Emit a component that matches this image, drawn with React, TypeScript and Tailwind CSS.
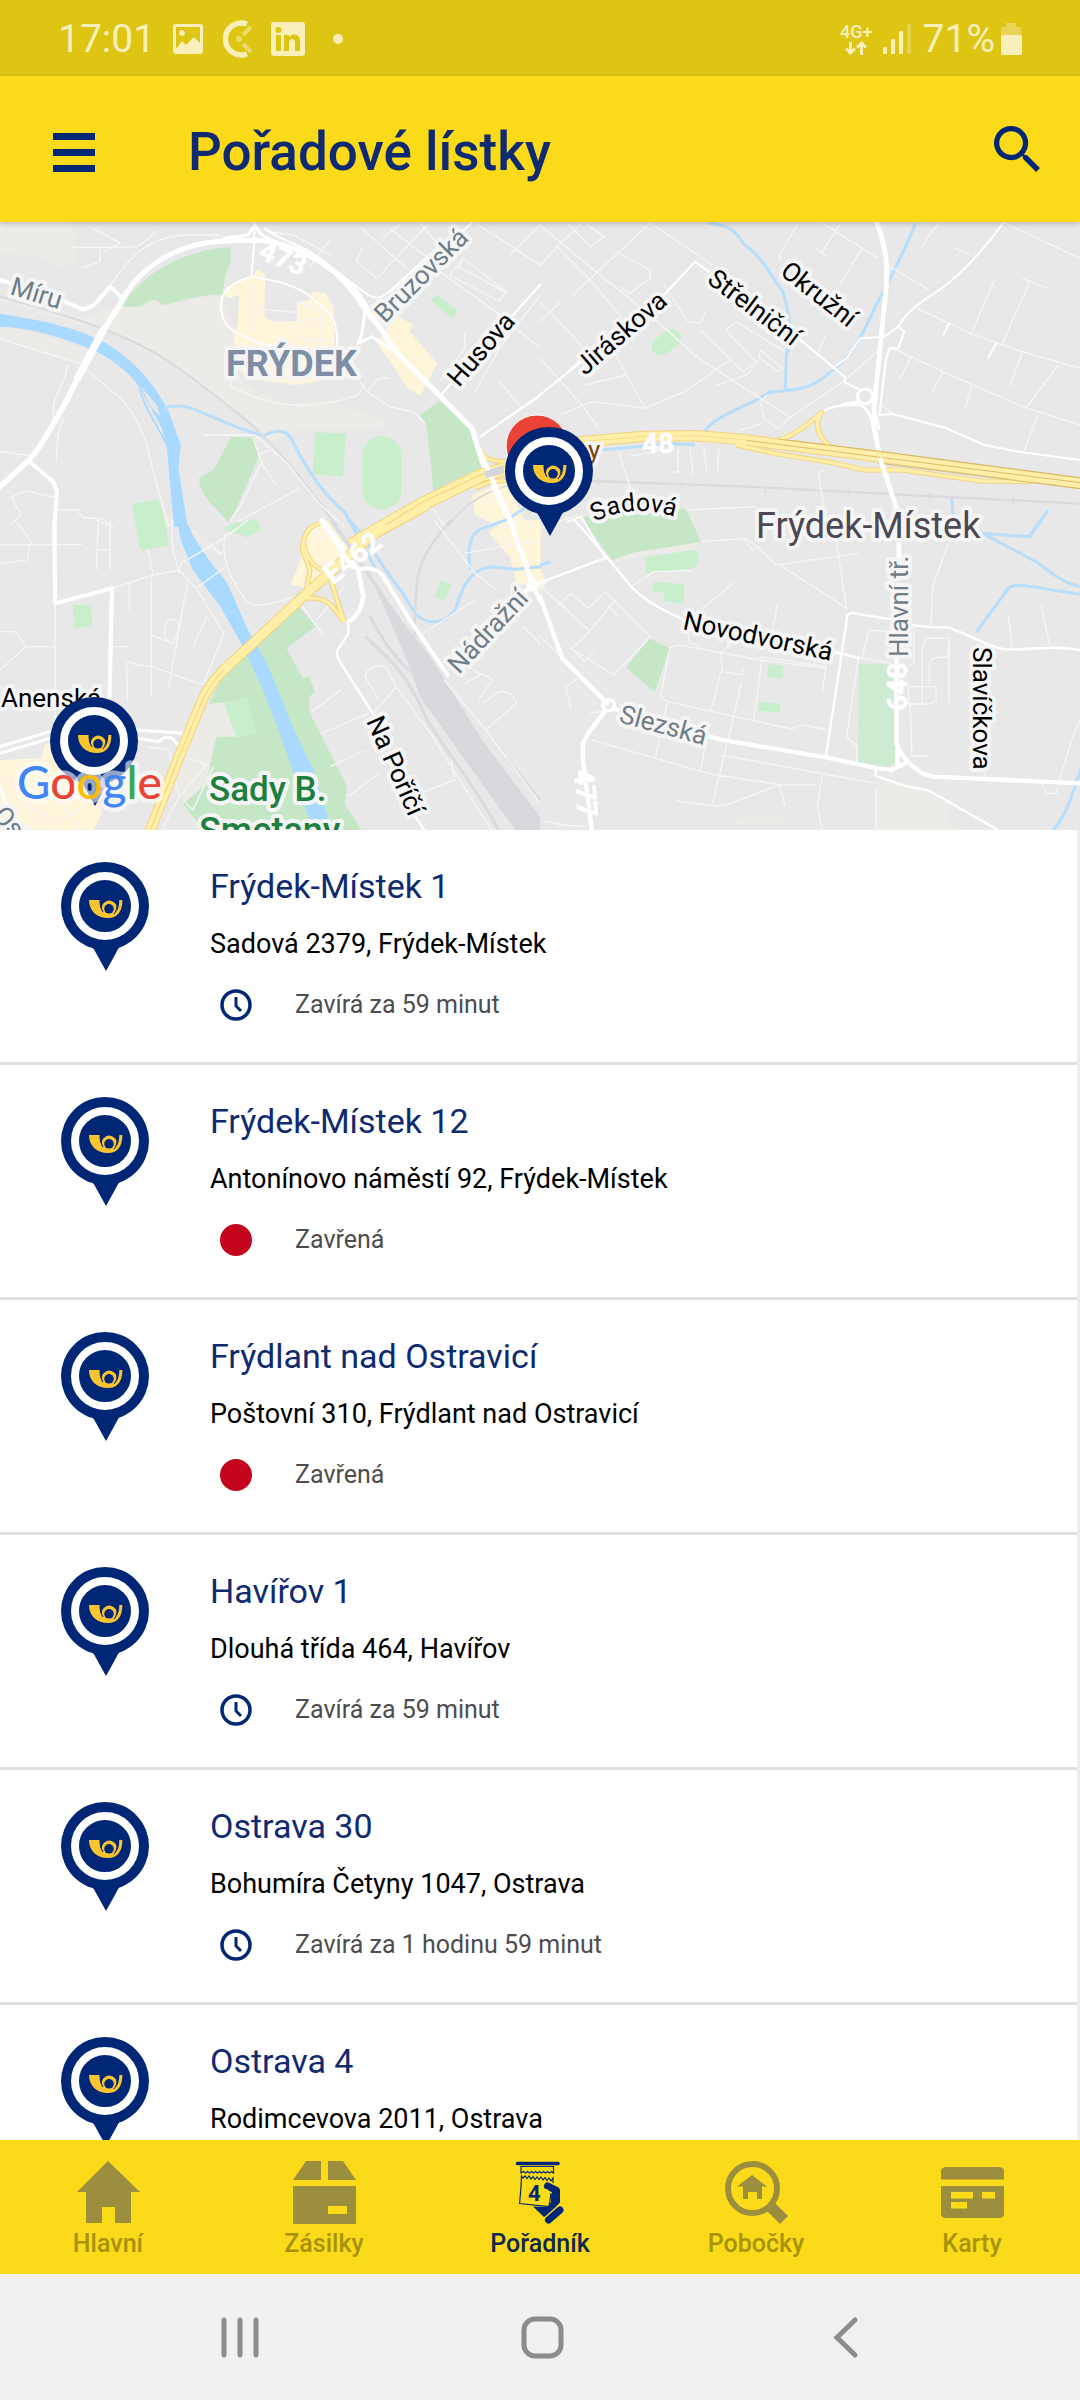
import type { ReactNode } from "react";

type Branch = { name: string; address: string; status: string; open: boolean };

const branches: Branch[] = [
  { name: "Frýdek-Místek 1", address: "Sadová 2379, Frýdek-Místek", status: "Zavírá za 59 minut", open: true },
  { name: "Frýdek-Místek 12", address: "Antonínovo náměstí 92, Frýdek-Místek", status: "Zavřená", open: false },
  { name: "Frýdlant nad Ostravicí", address: "Poštovní 310, Frýdlant nad Ostravicí", status: "Zavřená", open: false },
  { name: "Havířov 1", address: "Dlouhá třída 464, Havířov", status: "Zavírá za 59 minut", open: true },
  { name: "Ostrava 30", address: "Bohumíra Četyny 1047, Ostrava", status: "Zavírá za 1 hodinu 59 minut", open: true },
  { name: "Ostrava 4", address: "Rodimcevova 2011, Ostrava", status: "Zavírá za 59 minut", open: true },
];

function PinShape() {
  return (
    <>
      <path d="M26 80Q33 86 35 91L45 109L55 91Q57 86 63 80Z" fill="#002776" />
      <circle cx="44" cy="44" r="44" fill="#002776" />
      <circle cx="44" cy="44" r="30" fill="none" stroke="#fff" strokeWidth="8" />
      <path
        d="M28 38H38.5C38.5 44 39.5 47 41.5 49.5A7.6 7.6 0 1 1 52 52.8C56.5 50 58.3 45 58.3 38H61.4C61.4 50 56 56 47 56C36 56 28 49 28 38Z"
        fill="#fbc531"
      />
      <path d="M39.5 38C39.3 43 40 46.5 42 50M56 38C56.8 43 56 48 53 52" fill="none" stroke="#002776" strokeWidth="1" />
      <circle cx="48" cy="46.8" r="4.8" fill="#002776" />
    </>
  );
}

function PinIcon() {
  return (
    <svg viewBox="0 0 88 109" className="h-[109px] w-[88px]" aria-hidden="true">
      <PinShape />
    </svg>
  );
}

/* The map is authored as four tiles, each with its own fine grid. */
function Tile({ at, children }: { at: "nw" | "ne" | "sw" | "se"; children: ReactNode }) {
  const x = at === "nw" || at === "sw" ? 0 : 540;
  const y = at === "nw" || at === "ne" ? 215 : 520;
  return <g transform={`translate(${x} ${y}) scale(0.3444 0.3333)`}>{children}</g>;
}

function MapLabel({
  x, y, angle = 0, size = 26, color = "#000", weight = 400, halo = 8, children,
}: {
  x: number; y: number; angle?: number; size?: number; color?: string; weight?: number; halo?: number; children: ReactNode;
}) {
  return (
    <text
      transform={`translate(${x} ${y}) rotate(${angle})`}
      fontSize={size}
      fill={color}
      fontWeight={weight}
      stroke="#f5f5f5"
      strokeWidth={halo}
      strokeLinejoin="round"
      paintOrder="stroke"
    >
      {children}
    </text>
  );
}

function CityMap() {
  return (
    <svg
      viewBox="0 222 1080 608"
      preserveAspectRatio="xMidYMid slice"
      className="block h-[608px] w-full bg-[#e8e8e8]"
      fontFamily="Roboto, sans-serif"
      role="img"
      aria-label="Mapa poboček, Frýdek-Místek"
    >
      {/* land use */}
      <Tile at="nw">
        <g fill="#ecebe7">
          <path d="M0 20H200L220 60L215 140L165 160L120 125L0 115Z" />
          <path d="M0 240L150 285L250 310L330 275L450 255L475 270L640 240L690 350V480L740 530L850 570L960 555L1120 620L1110 640L860 645L790 680L740 640L540 475L330 355L0 260Z" />
          <path d="M0 340L90 350L250 400L250 450L0 370Z" />
        </g>
        <g fill="#c6e7c6">
          <path d="M355 275C400 190 520 105 668 96L672 140C650 170 652 210 645 240C590 235 520 260 472 270L450 252L400 276Z" />
          <path d="M1220 600L1275 558L1370 640L1397 700V760L1258 825C1250 740 1245 660 1235 625Z" />
          <path d="M672 665L735 668L750 730L665 930C640 880 585 860 577 790L620 765Z" />
        </g>
        <g fill="#c9eecb">
          <path d="M383 868L460 852L490 980L405 1000Z" />
          <path d="M915 652L1005 655L996 785L908 778Z" />
          <rect x="1052" y="664" width="114" height="220" rx="57" />
          <path d="M1250 258L1270 238L1330 290L1312 312Z" />
          <path d="M660 930L740 912L750 940L700 960L650 945Z" />
        </g>
        <g fill="#fef5da">
          <path d="M650 240L660 220L735 180L750 162L770 180L768 305L795 320L862 318V262L900 255L905 230L945 235L968 275L975 490L860 510L720 490L680 450V360L690 330L695 240L665 250Z" />
          <path d="M1095 385L1150 300L1200 330L1190 350L1270 445L1220 542L1180 515L1140 450Z" />
          <path d="M1370 840L1470 800L1530 930H1440L1380 900Z" />
        </g>
      </Tile>
      <Tile at="ne">
        <path d="M118 908L420 880L465 980L300 1010L210 1035Z" fill="#c6e7c6" />
        <rect x="320" y="355" width="94" height="54" rx="27" fill="#c9eecb" transform="rotate(-38 367 382)" />
      </Tile>
      <Tile at="sw">
        <path d="M420 -20L530 0L650 100L600 90L560 40Z" fill="#ecebe7" />
        <path d="M600 550L660 545L690 650L620 655L600 800L540 850L490 800L560 640Z" fill="#ecebe7" />
        <g fill="#c6e7c6">
          <path d="M720 390L870 260L917 320L832 385L880 475L897 470L915 515L897 530L900 580L1008 800L1000 850L1050 930H590L532 852L600 790L628 650L745 640L690 545L605 555L640 480Z" />
          <path d="M600 553L660 545L690 650L628 650Z" fill="#ecebe7" />
        </g>
        <g fill="#c9eecb">
          <path d="M392 0L470 -40L490 75L412 92Z" />
          <path d="M212 254H264L267 320L216 324Z" />
          <path d="M696 28L745 0L760 28L710 55Z" />
          <path d="M650 548L715 530L748 635L688 655Z" />
          <path d="M1280 182L1310 195L1290 243L1260 228Z" />
        </g>
        <g fill="#fef5da">
          <path d="M0 720L120 715L130 675L200 665L280 790L295 880L270 935H0Z" />
          <path d="M900 20L950 0L1030 110L960 160L900 205L843 195L870 130L885 60Z" />
          <path d="M1420 40L1460 0H1570V200L1500 190L1480 110Z" />
        </g>
      </Tile>
      <Tile at="se">
        <g fill="#c6e7c6">
          <path d="M118 -10L430 -20L467 65L270 95L210 120Z" />
          <path d="M318 355L377 385L333 515L250 443Z" />
          <path d="M926 432H1032L1030 730L1010 742L922 730Z" fill="#cdebd0" />
        </g>
        <path d="M215 118L280 95L465 68L460 85L300 105L215 130Z" fill="#ecebe7" />
        <g fill="#c9eecb">
          <path d="M303 112L450 90C470 105 465 140 440 145L310 162Z" />
          <path d="M330 185L420 192L415 252L360 243V218L325 214Z" />
          <path d="M664 432L706 437L703 478L660 470Z" />
          <path d="M636 545L698 552L697 579L633 572Z" />
        </g>
        <path d="M980 775L1120 810L1195 850L1185 910L1240 935H975Z" fill="#ecebe7" />
        <path d="M540 910L650 882L710 895L715 912Z" fill="#ecebe7" />
        <path d="M0 140L18 190L0 215Z" fill="#fef5da" />
      </Tile>

      {/* water */}
      <Tile at="nw">
        <path d="M0 296C120 315 210 335 290 375C390 430 450 510 490 590L525 690L518 760L545 935H505L485 700L470 640L407 520C370 460 310 425 270 405C190 370 80 335 0 335Z" fill="#a9d9ff" />
        <path d="M405 520C420 580 450 620 485 690" fill="none" stroke="#a9d9ff" strokeWidth="5" />
        <path d="M408 512L455 570L465 605L438 575Z" fill="#e8e8e8" />
        <path d="M475 578C520 568 545 572 580 590C660 625 700 645 765 662C810 640 835 645 850 680C890 760 930 830 1000 890L1100 1080" fill="none" stroke="#b9def9" strokeWidth="9" />
      </Tile>
      <Tile at="ne">
        <g fill="none" stroke="#b9def9" strokeWidth="9">
          <path d="M490 24C550 30 570 50 590 85C650 130 660 170 705 230C725 300 735 360 715 420L712 525" />
          <path d="M1090 24C1060 110 1020 180 1000 225C940 330 935 400 850 465C790 525 740 525 665 532C620 570 500 600 475 655" />
          <path d="M175 705C270 700 350 680 450 690" />
          <path d="M1195 850L1200 900" />
          <path d="M1475 885L1420 970" />
        </g>
      </Tile>
      <Tile at="sw">
        <path d="M512 -20L550 20L562 50L600 110L660 190L720 330L775 430L850 620L910 750L965 935H910L860 780L805 620L760 500L700 370L640 260L560 150L525 60Z" fill="#a9d9ff" />
        <g fill="none" stroke="#b9def9" strokeWidth="9">
          <path d="M1015 0C1070 60 1100 130 1170 220C1210 290 1220 310 1270 305C1340 290 1320 230 1360 180C1410 120 1440 145 1500 148L1570 140" />
          <path d="M1366 150C1355 80 1365 40 1400 25L1470 0L1560 -60" />
        </g>
      </Tile>
      <Tile at="se">
        <g fill="none" stroke="#b9def9" strokeWidth="9">
          <path d="M1200 -20L1240 15L1440 125C1500 170 1520 190 1570 200" />
          <path d="M1280 40L1420 50L1465 -15" />
          <path d="M1268 335L1360 205C1380 185 1440 205 1570 222" />
          <path d="M1580 720C1550 800 1540 870 1490 930" />
          <path d="M0 135L32 126" />
        </g>
      </Tile>

      {/* railways */}
      <g fill="none" stroke="#dadbdf">
        <Tile at="nw">
          <path d="M0 245C140 285 250 320 330 355C450 400 540 470 720 620C840 730 900 830 980 935" strokeWidth="7" />
          <path d="M1300 935C1350 860 1420 825 1500 805" strokeWidth="6" />
        </Tile>
        <Tile at="ne">
          <path d="M150 798L600 815L1100 842L1570 866" strokeWidth="7" />
          <path d="M170 788V808M412 800V822M653 812V834M895 824V846M1131 832V854M1373 846V868" strokeWidth="5" />
        </Tile>
        <Tile at="sw">
          <path d="M960 0C1060 140 1130 260 1190 350L1230 400" strokeWidth="10" />
          <path d="M1310 0C1240 80 1215 130 1210 200C1205 280 1200 340 1205 400" strokeWidth="8" />
          <path d="M1060 350C1150 430 1190 480 1240 600C1300 700 1400 830 1450 935M1075 290C1120 380 1160 430 1200 460" strokeWidth="9" />
          <path d="M1085 190L1180 320L1250 410L1400 660L1568 890V935H1500L1350 720L1220 530L1190 440Z" fill="#d7d9dd" stroke="none" />
          <path d="M1470 715L1568 840" strokeWidth="9" />
        </Tile>
      </g>

      {/* minor streets */}
      <g fill="none" stroke="#f6f6f6" strokeWidth="4">
        <Tile at="nw">
          <path d="M210 97H290L400 95L455 50M290 100V140L240 158M300 110L350 85L270 40M320 212C380 120 430 70 530 60L640 60" />
          <path d="M0 372L230 445L350 550C430 640 430 720 450 790L490 935M195 450C190 520 150 530 155 610M185 610C165 640 165 700 165 740M0 710L85 722M25 850L75 828L170 850M35 850L60 900L30 930M160 885H225L240 908L300 912L330 940" />
          <path d="M590 660H740L830 740L930 870L1000 935M735 670L760 740L700 870L660 930M760 745L800 808M750 720L785 705M870 820L690 920" />
          <path d="M670 485V515L745 548C860 590 960 570 1040 540L1060 505M1045 500L1065 530L1100 490L1130 488M1065 530L1130 575L1200 590L1235 625M850 440V510" />
          <path d="M735 280L855 292M735 200V350M865 262L920 280L940 300L930 390M865 318L935 310M880 375H970M865 310V380" />
          <path d="M780 50L850 60L960 120M960 70L900 155M1050 40L1180 160M1110 70L1160 30M1220 24L1290 110M1050 100L1035 140L1095 190L1240 30M1130 40L1250 135M1305 180L1450 258L1470 230L1345 130ZM1330 155L1465 230M1345 130L1330 160M1260 155L1450 300L1568 400M1290 180L1480 320M1380 24L1568 150M1480 120L1568 30M1568 240L1450 400L1380 530M1450 500L1515 580M1350 350V400L1280 500" />
          <path d="M1258 880L1290 935M1395 665L1568 545" />
        </Tile>
        <Tile at="ne">
          <path d="M0 30L150 160L320 300L460 430L730 610M50 95L150 200L240 310M0 150L50 95L120 24M95 240L320 24L500 150M80 24L145 95L185 65L130 24M220 110L320 165V190L260 235L230 215M0 260L110 380L125 400L105 450M0 430L130 580L170 640M0 540L70 480L100 450L250 340M220 420L305 580M130 510L250 480M60 600L150 560L305 580L420 530L560 430M0 320L60 260M360 210L430 320L465 325L480 290M465 345L590 470L635 435L640 405L705 460L690 470L640 430M540 345L570 320L710 410M540 345L630 445L600 480L510 512M800 430L830 360M660 540L640 560L650 610L690 640L730 605L880 500L990 400M580 645L650 625M750 24L695 120L700 140M800 100L835 125M820 110L870 30M935 100L870 210M935 100L820 24M935 100L980 130" />
          <path d="M1000 145L1130 225M1130 60L1160 24M1108 100L1130 60M1200 98L1250 120M1350 24L1568 130M1095 280L1250 355L1400 410L1568 460M1400 190L1478 222M1425 195L1340 390M1320 195L1250 360M1400 410L1365 515M1505 450L1410 580M1015 395L1170 470L1400 575L1568 630M1078 425L1045 492M1170 470L1140 530M1252 515L1235 578M1445 600L1405 712M990 570L1030 600" />
          <path d="M230 715L265 830L290 850M400 700L402 770L378 772M435 695L445 780M475 695L485 775M520 700L515 775M265 722L390 700M825 765L808 775L825 880M0 940L110 900M430 885L630 875" />
        </Tile>
        <Tile at="sw">
          <path d="M0 75L240 73M95 73L60 20L40 0M85 75L80 120L0 130M285 0L280 150M280 90H320M322 20L280 0M320 0V150M375 185V270M160 250V640M160 380H75L45 335H0M75 380L0 450M0 500L50 540M325 380H375M440 165V525M545 185L490 500M370 545L368 430Q380 420 395 435L440 440L590 495M430 90L445 165L325 205M445 165L520 150L570 205L650 340L590 495M570 205L655 140M440 345L500 370Q520 340 520 310Q490 280 480 320Q470 360 500 370M600 290L560 380" />
          <path d="M500 0V80L520 160L525 130L650 55L720 0M655 40C640 100 660 160 700 220C720 260 750 270 850 230M615 75L640 105L655 85M870 250L940 345M920 300L1000 200M900 20L940 60" />
          <path d="M935 640L1070 580M905 575L990 510M1060 470Q1070 430 1120 440L1150 500L1250 640L1310 740L1430 935M1060 470L1100 540M1150 500L1085 580M960 740L1060 690M1010 830L1100 760M1310 720L1320 780L1220 820M1290 480L1410 630L1568 850M1350 490L1400 460L1430 480L1390 540M1400 550L1450 515Q1490 510 1500 550L1410 630M1220 345L1380 240M1340 430L1400 465M1520 320L1568 370M1260 0L1380 160L1440 210M1350 100L1568 60" />
          <path d="M550 715L600 735L520 830M540 850L560 870L620 740M430 680L490 690L520 830L470 930M130 800L200 840L260 830M180 840L230 935M60 850L130 880L110 935M230 870L170 900" />
        </Tile>
        <Tile at="se">
          <path d="M55 255L90 220L140 265L190 215L320 350L215 465L90 385L130 350L220 240M90 385L130 425L155 400M0 195L140 330M0 350L60 410M50 250L75 260M195 250L225 290M265 200L330 155L440 152M465 270L565 187M470 65L600 55L640 90L685 135L925 100M590 50L615 90L640 80M700 137L890 265L860 60M690 250L675 330M1135 320L1140 200L1185 70" />
          <path d="M375 385Q400 370 430 380L640 420L830 445L820 515M430 340L435 370L465 380M545 345V380L525 400L530 455L585 465L590 440M640 410L830 440L840 400L920 410L935 415L955 330L1030 335M645 415L620 605M550 350V385M375 390L350 530L370 545L730 627L760 615L840 630M525 455L495 580M585 490L500 855M370 545L335 715M150 660L470 755L515 765L700 795L800 795M525 705L975 790M480 680L465 755M395 842L500 858L540 855L695 795L712 860M820 765L805 860L820 930M975 800L975 925L1000 935M860 400L1020 430M925 415L890 650L920 680V730" />
          <path d="M1110 550V380L1120 355H1188L1185 410L1140 415L1130 430V498M1070 500H1150V545L1130 552H1070V500M1188 355V550M1085 320V430L1070 440M1075 550L1080 708H1125M1290 570V770M1455 790L1470 820H1500L1508 780L1550 640L1568 600M1360 285L1370 380M1455 255L1480 375M75 500L90 565M75 500L110 475M145 580L200 570M15 905L70 915M50 920L70 915L135 920" />
        </Tile>
      </g>

      {/* main roads */}
      <g fill="none" stroke="#fff" strokeLinecap="round" strokeLinejoin="round">
        <Tile at="nw">
          <path d="M738 24V85L730 185M770 40C800 70 850 80 900 110C960 150 1010 200 1070 240Q1100 260 1130 230L1290 80M730 185C650 210 640 240 642 280C650 360 700 350 750 385L975 420C985 370 975 320 960 300C920 260 890 230 850 215C800 195 770 190 730 185" strokeWidth="6" />
          <path d="M0 195L60 215M165 250L240 283Q270 280 290 250L320 215L355 250" strokeWidth="12" />
          <path d="M0 815L85 735L115 695C160 620 200 550 225 490L310 330L350 265" strokeWidth="16" />
          <path d="M225 490L300 345" strokeWidth="22" />
          <path d="M350 265C400 160 510 85 650 78L740 76C850 80 950 140 1030 225C1080 300 1110 350 1150 410L1280 545L1370 640L1400 740L1440 830L1490 935" strokeWidth="15" />
          <path d="M740 30L720 60L650 70M738 30L760 60L830 95C950 140 1010 200 1060 290L1150 400M1060 290L1050 360L1040 385M1040 385L1080 365L1130 400" strokeWidth="9" />
          <path d="M80 735L155 800L165 830L158 935" strokeWidth="12" />
          <path d="M1280 540L1568 210M1130 230L1370 24M1395 665L1568 540" strokeWidth="6" />
        </Tile>
        <Tile at="ne">
          <path d="M978 24C1005 100 1010 140 1005 220C995 320 985 430 975 520L968 620C975 680 990 740 1035 880" strokeWidth="14" />
          <circle cx="944" cy="544" r="22" strokeWidth="9" />
          <path d="M815 592Q860 565 930 570Q960 585 968 640M880 568L930 560M965 560L985 640" strokeWidth="8" />
          <path d="M1345 24C1270 130 1190 210 1130 245C1080 280 1060 300 1040 335L1000 365L930 370L890 430L850 460M1040 335L1058 350L1040 400L1015 400L1005 430L985 600L1025 597L1180 640L1290 690L1400 712L1568 735M750 370L885 485V503L930 525M450 140L490 170M450 140L360 240M0 540L120 440M190 1030L120 905L80 920M1325 385L1302 428M1187 327L1172 358" strokeWidth="6" />
        </Tile>
        <Tile at="sw">
          <path d="M158 0L160 250L325 205L318 530" strokeWidth="12" />
          <path d="M0 680L145 635M0 700L145 655M400 630L530 640M400 655L460 665Q480 645 500 655L520 680" strokeWidth="9" />
          <path d="M935 0L1040 150L1055 230Q1050 280 1012 305" strokeWidth="13" />
          <path d="M1040 150Q1080 135 1110 165L1190 300L1300 465" strokeWidth="12" />
          <path d="M1010 305L1012 340L980 390Q975 410 990 430L1085 585M1200 880L1235 935" strokeWidth="7" />
          <path d="M1480 0L1545 190L1568 240M1540 200L1500 240" strokeWidth="14" />
          <circle cx="1548" cy="197" r="14" strokeWidth="8" />
          <path d="M0 800L20 860" strokeWidth="10" />
        </Tile>
        <Tile at="se">
          <path d="M0 230L65 415L195 550" strokeWidth="13" />
          <circle cx="199" cy="556" r="17" strokeWidth="9" />
          <path d="M190 572L140 640L125 670V720L150 930M215 565L240 575M470 645L540 662L830 712L980 745L1020 750L1060 730" strokeWidth="13" />
          <path d="M1042 50V120M1035 410V670Q1050 720 1110 760L1140 770L1568 790M1038 690V740" strokeWidth="13" />
          <path d="M0 188L195 112L265 200Q310 250 410 295M195 112L100 0M830 710L893 285Q900 275 930 283L1020 298M1080 315L1140 322L1185 322C1260 350 1300 380 1350 388C1440 390 1480 375 1568 390M975 750V768L1060 798L1130 812L1330 930M860 395L925 415" strokeWidth="7" />
        </Tile>
      </g>

      {/* highways */}
      <g fill="none" strokeLinejoin="round">
        <g stroke="#f3d27c">
          <Tile at="nw">
            <path d="M1020 990L1120 930L1230 865L1400 780L1568 735" strokeWidth="42" />
            <path d="M1395 705Q1400 745 1500 740M1380 820Q1430 790 1490 800" strokeWidth="15" />
          </Tile>
          <Tile at="ne">
            <path d="M0 725L120 680L300 664L450 662L600 675L980 725L1568 805" strokeWidth="34" />
            <path d="M690 675Q740 665 818 592Q785 640 840 695L910 708M570 690L680 715L860 745L940 765L1050 765L1280 798L1430 800" strokeWidth="15" />
          </Tile>
          <Tile at="sw">
            <path d="M1240 -45L1080 45L880 230L650 450Q600 500 580 560L520 710L435 935" strokeWidth="32" />
            <path d="M930 10Q880 20 878 90L900 150L890 210M880 60Q890 130 935 150M960 170Q970 220 1000 305M890 235Q940 230 965 260L1000 305" strokeWidth="15" />
          </Tile>
        </g>
        <g stroke="#ffefa8">
          <Tile at="nw">
            <path d="M1020 990L1120 930L1230 865L1400 780L1568 735" strokeWidth="36" />
            <path d="M1395 705Q1400 745 1500 740M1380 820Q1430 790 1490 800" strokeWidth="9" />
          </Tile>
          <Tile at="ne">
            <path d="M0 725L120 680L300 664L450 662L600 675L980 725L1568 805" strokeWidth="28" />
            <path d="M690 675Q740 665 818 592Q785 640 840 695L910 708M570 690L680 715L860 745L940 765L1050 765L1280 798L1430 800" strokeWidth="10" />
          </Tile>
          <Tile at="sw">
            <path d="M1240 -45L1080 45L880 230L650 450Q600 500 580 560L520 710L435 935" strokeWidth="26" />
            <path d="M930 10Q880 20 878 90L900 150L890 210M880 60Q890 130 935 150M960 170Q970 220 1000 305M890 235Q940 230 965 260L1000 305" strokeWidth="9" />
          </Tile>
        </g>
        <Tile at="ne">
          <path d="M600 676L980 726L1568 803M690 672L980 708L1568 788M980 744L1568 821" stroke="#c9a24a" strokeWidth="2" />
          <path d="M120 680L300 664L450 662L600 675" stroke="#f3d27c" strokeWidth="2" />
          <path d="M987 728L990 740L1010 800" stroke="#fff" strokeWidth="13" />
        </Tile>
        <Tile at="sw">
          <path d="M650 450Q600 500 580 560L520 710L435 935" stroke="#f3d27c" strokeWidth="3" />
          <path d="M930 0L1000 105" stroke="#fff" strokeWidth="12" />
        </Tile>
        <Tile at="nw">
          <path d="M1120 930L1230 860L1400 778L1480 750" stroke="#f3d27c" strokeWidth="3" />
          <path d="M1385 690L1490 935" stroke="#fff" strokeWidth="14" />
          <path d="M1405 770L1460 750L1465 775L1410 790Z" fill="#d5d7db" />
        </Tile>
      </g>

      {/* road numbers */}
      <MapLabel x={257} y={258} angle={22} size={28} color="#fff" weight={700} halo={1}>473</MapLabel>
      <MapLabel x={642} y={453} size={28} color="#fff" weight={700} halo={1}>48</MapLabel>
      <MapLabel x={333} y={585} angle={-38} size={28} color="#fff" weight={700} halo={1}>E462</MapLabel>
      <MapLabel x={907} y={711} angle={-90} size={28} color="#fff" weight={700} halo={1}>648</MapLabel>
      <MapLabel x={574} y={770} angle={85} size={28} color="#fff" weight={700} halo={1}>477</MapLabel>

      {/* street names */}
      <MapLabel x={9} y={294} angle={17} color="#6f7d87">Míru</MapLabel>
      <MapLabel x={385} y={324} angle={-45} color="#6f7d87">Bruzovská</MapLabel>
      <MapLabel x={459} y={388} angle={-49}>Husova</MapLabel>
      <MapLabel x={585} y={376} angle={-41}>Jiráskova</MapLabel>
      <MapLabel x={706} y={282} angle={37}>Střelniční</MapLabel>
      <MapLabel x={779} y={274} angle={38}>Okružní</MapLabel>
      <path id="sadova" d="M595 522Q635 500 690 522" fill="none" />
      <text fontSize="25" stroke="#f5f5f5" strokeWidth="8" strokeLinejoin="round" paintOrder="stroke">
        <textPath href="#sadova">Sadová</textPath>
      </text>
      <MapLabel x={682} y={629} angle={12}>Novodvorská</MapLabel>
      <MapLabel x={618} y={722} angle={15} color="#6f7d87">Slezská</MapLabel>
      <MapLabel x={459} y={675} angle={-47} color="#6f7d87">Nádražní</MapLabel>
      <MapLabel x={366} y={721} angle={66}>Na Poříčí</MapLabel>
      <MapLabel x={908} y={657} angle={-90} color="#6f7d87">Hlavní tř.</MapLabel>
      <MapLabel x={973} y={647} angle={90}>Slavíčkova</MapLabel>
      <MapLabel x={1} y={707}>Anenská</MapLabel>
      <MapLabel x={-8} y={816} angle={48} color="#6f7d87">Ost</MapLabel>
      <MapLabel x={588} y={459} color="#7a4512">y</MapLabel>

      {/* districts */}
      <MapLabel x={226} y={376} size={36} color="#7e8ea5" weight={700}>FRÝDEK</MapLabel>
      <MapLabel x={756} y={538} size={36} color="#4c4753">Frýdek-Místek</MapLabel>
      <MapLabel x={209} y={801} size={35} color="#1e8040" weight={500}>Sady B.</MapLabel>
      <MapLabel x={199} y={843} size={36} color="#1e8040" weight={500}>Smetany</MapLabel>

      {/* markers */}
      <circle cx="537" cy="446" r="31" fill="#ea4335" stroke="#fff" strokeWidth="1" />
      <path d="M530 500H548L543 521Z" fill="#ea4335" />
      <g transform="translate(505 427)"><PinShape /></g>
      <g transform="translate(50 697)"><PinShape /></g>

      <text x="17" y="799" fontFamily="Lato, sans-serif" fontSize="46" fontWeight="500" stroke="#fff" strokeOpacity="0.6" strokeWidth="9" strokeLinejoin="round" paintOrder="stroke">
        <tspan fill="#4285f4">G</tspan>
        <tspan fill="#ea4335">o</tspan>
        <tspan fill="#fbbc05">o</tspan>
        <tspan fill="#4285f4">g</tspan>
        <tspan fill="#34a853">l</tspan>
        <tspan fill="#ea4335">e</tspan>
      </text>
    </svg>
  );
}

function StatusBar() {
  return (
    <div className="flex h-[76px] shrink-0 items-center justify-between bg-[#dec413] px-[58px] pt-[2px] text-[#f8efbb]">
      <div className="flex items-center">
        <span className="text-[39px] leading-none">17:01</span>
        <svg viewBox="0 0 32 32" className="ml-[17px] h-8 w-8" aria-hidden="true">
          <path fillRule="evenodd" fill="currentColor" d="M4 1H28Q31 1 31 4V28Q31 31 28 31H4Q1 31 1 28V4Q1 1 4 1ZM4 4V26L10 18L14 22L22 14L28 20V4ZM10 7A3 3 0 1 1 9.9 7Z" />
        </svg>
        <svg viewBox="0 0 34 38" className="ml-4 h-[38px] w-[34px]" aria-hidden="true" fill="none" stroke="currentColor">
          <path d="M27 4A16 16 0 1 0 27 34" strokeWidth="5.5" />
          <path d="M31 7L23 15M31 32L23 24" strokeWidth="4" opacity=".5" />
          <circle cx="19" cy="19" r="3" fill="currentColor" stroke="none" opacity=".5" />
        </svg>
        <svg viewBox="0 0 34 34" className="ml-[17px] h-[34px] w-[34px]" aria-hidden="true">
          <rect width="34" height="34" rx="3" fill="currentColor" />
          <g fill="#dec413">
            <circle cx="7.5" cy="8" r="3" />
            <path d="M5 13H10V29H5ZM13 13H18V15.5Q20 12.5 23.5 12.5Q29 12.5 29 19V29H24V20.5Q24 17 21.2 17Q18 17 18 20.5V29H13Z" />
          </g>
        </svg>
        <span className="ml-7 h-[10px] w-[10px] rounded-full bg-[#f8efbb]" />
      </div>
      <div className="flex items-center">
        <div className="flex flex-col items-center">
          <span className="text-[18px] leading-[18px] font-medium">4G+</span>
          <svg viewBox="0 0 22 14" className="h-[14px] w-[22px]" aria-hidden="true" fill="none" stroke="currentColor" strokeWidth="3">
            <path d="M5.5 1V12M1 7.5L5.5 12L10 7.5M16.5 14V2M12 6.5L16.5 2L21 6.5" />
          </svg>
        </div>
        <svg viewBox="0 0 28 32" className="ml-[10px] h-8 w-7" aria-hidden="true" fill="currentColor">
          <rect x="0" y="24" width="4" height="7" rx="1" />
          <rect x="8" y="16" width="4" height="15" rx="1" />
          <rect x="16" y="8" width="4" height="23" rx="1" />
          <rect x="24" y="1" width="4" height="30" rx="1" opacity=".35" />
        </svg>
        <span className="ml-3 text-[39px] leading-none">71%</span>
        <svg viewBox="0 0 22 34" className="ml-[5px] h-[34px] w-[22px]" aria-hidden="true" fill="currentColor">
          <path d="M6 1H16V5H21V14H1V5H6Z" opacity=".4" />
          <path d="M1 13H22V31Q22 33 20 33H3Q1 33 1 31Z" />
        </svg>
      </div>
    </div>
  );
}

const HomeIcon = (
  <path d="M31 0L63 31H54V62H38V46H25V62H9V31H0Z" />
);
const ParcelIcon = (
  <path fillRule="evenodd" d="M0 19L13 0H28V19ZM35 0H50L63 19H35ZM0 25H63V63H0ZM35 45V53H54V45Z" />
);
const TicketIcon = (
  <>
    <path d="M8.5 2.5H49" stroke="currentColor" strokeWidth="3.5" strokeLinecap="round" />
    <g fill="none" stroke="currentColor" strokeWidth="1.2">
      <path d="M12 5.5H44.5V12L42.5 10.5L40.5 12L38.5 10.5L36.5 12L34.5 10.5L32.5 12L30.5 10.5L28.5 12L26.5 10.5L24.5 12L22.5 10.5L20.5 12L18.5 10.5L16.5 12L14.5 10.5L12 12Z" />
      <path d="M44 22V17L42 20L40 17L38 19.5L36 16.5L34 19L32 16L30 18.5L28 16L26 18.5L24 15.5L22 18L20 15L18 17.5L16 15L14 17L12.5 15L12 26" />
    </g>
    <path d="M24 45.5L40 46L42 43V34L45 28L51 29V41L40 52L35 56Z" />
    <path d="M38.5 25L47.5 29.5V40L37 52" fill="none" stroke="currentColor" strokeWidth="7" strokeLinecap="round" strokeLinejoin="round" />
    <path d="M12.5 28L11.2 42Q20 45 41 44.5V31L38 28Z" fill="#fada19" />
    <path d="M12 26L10.6 42.5L40 45.5L42 32" fill="none" stroke="currentColor" strokeWidth="1.2" />
    <path d="M39.5 59L51 49" stroke="#fada19" strokeWidth="10" strokeLinecap="round" />
    <path d="M39.5 59L51 49" stroke="currentColor" strokeWidth="7" strokeLinecap="round" />
    <text x="19" y="40" fontSize="22" fontWeight="700" fontFamily="Roboto, sans-serif">4</text>
  </>
);
const BranchesIcon = (
  <>
    <circle cx="27.5" cy="27.5" r="24.5" fill="none" stroke="currentColor" strokeWidth="6" />
    <path d="M50 42L63 55L55 63L42 50Z" />
    <path d="M27 14L42 25.5H37V38H32V31H23V38H18V25.5H12Z" />
  </>
);
const CardsIcon = (
  <path fillRule="evenodd" d="M4 6H59Q63 7 63 10V18.5H0V10Q0 7 4 6ZM0 25H63V53Q63 56 59 57H4Q0 56 0 53ZM10 31V37.5H32V31ZM41 31V37.5H54V31ZM10 41V47.5H26V41Z" />
);

const tabs = [
  { label: "Hlavní", icon: HomeIcon, active: false },
  { label: "Zásilky", icon: ParcelIcon, active: false },
  { label: "Pořadník", icon: TicketIcon, active: true },
  { label: "Pobočky", icon: BranchesIcon, active: false },
  { label: "Karty", icon: CardsIcon, active: false },
];

function BranchRow({ branch }: { branch: Branch }) {
  return (
    <li className="flex h-[235px] shrink-0 border-b-[3px] border-[#e0e0e0] pt-8 pl-[61px]">
      <PinIcon />
      <div className="ml-[61px] flex flex-col">
        <h2 className="text-[34px] leading-[48px] text-[#0f2a70]">{branch.name}</h2>
        <p className="mt-[17px] text-[27px] leading-[34px] text-black">{branch.address}</p>
        <div className="mt-7 flex items-center">
          <span className="flex w-[85px] pl-[10px]">
            {branch.open ? (
              <svg viewBox="0 0 32 32" className="h-8 w-8" aria-hidden="true" fill="none" stroke="#002776">
                <circle cx="16" cy="16" r="14" strokeWidth="3.5" />
                <path d="M16 8V17L21 22" strokeWidth="3" />
              </svg>
            ) : (
              <span className="h-8 w-8 rounded-full bg-[#c4051d]" />
            )}
          </span>
          <span className="text-[25px] leading-8 text-[#4d4d4d]">{branch.status}</span>
        </div>
      </div>
    </li>
  );
}

export default function App() {
  return (
    <div className="flex h-screen flex-col overflow-hidden bg-white font-[Roboto,sans-serif]">
      <StatusBar />
      <header className="relative z-10 flex h-[146px] shrink-0 items-center bg-[#fada19] px-10 shadow-[0_2px_5px_rgba(0,0,0,0.2)]">
        <button type="button" aria-label="Nabídka" className="px-[13px] pt-[6px] text-[#002776]">
          <svg viewBox="0 0 42 39" className="block h-[39px] w-[42px]" fill="currentColor" aria-hidden="true">
            <path d="M0 0H42V7H0ZM0 16H42V23H0ZM0 32H42V39H0Z" />
          </svg>
        </button>
        <h1 className="ml-[80px] flex-1 pt-[6px] text-[53px] leading-[64px] font-medium text-[#0f2a70]">Pořadové lístky</h1>
        <button type="button" aria-label="Hledat" className="text-[#002776]">
          <svg viewBox="3 3 17.5 17.5" className="block h-[46px] w-[46px]" fill="currentColor" aria-hidden="true">
            <path d="M15.5 14h-.79l-.28-.27A6.471 6.471 0 0 0 16 9.5 6.5 6.5 0 1 0 9.5 16c1.61 0 3.09-.59 4.23-1.57l.27.28v.79l5 4.99L20.49 19l-4.99-5zm-6 0C7.01 14 5 11.99 5 9.5S7.01 5 9.5 5 14 7.01 14 9.5 11.99 14 9.5 14z" />
          </svg>
        </button>
      </header>
      <main className="flex min-h-0 flex-1 flex-col">
        <div className="shrink-0"><CityMap /></div>
        <ul className="min-h-0 flex-1 overflow-y-auto border-r-[3px] border-[#eeeeee] [scrollbar-width:none]">
          {branches.map((b) => <BranchRow key={b.name} branch={b} />)}
        </ul>
      </main>
      <nav className="grid h-[134px] shrink-0 grid-cols-5 bg-[#fada19]">
        {tabs.map((t) => (
          <a
            key={t.label}
            href="#"
            aria-current={t.active ? "page" : undefined}
            className={`flex flex-col items-center pt-[21px] ${t.active ? "text-[#002776]" : "text-[#9c8e3f]"}`}
          >
            <svg viewBox="0 0 63 63" className="h-[63px] w-[63px]" fill="currentColor" aria-hidden="true">{t.icon}</svg>
            <span className={`mt-1 text-[25px] leading-8 font-medium ${t.active ? "text-[#10284f]" : "text-[#a8920c]"}`}>{t.label}</span>
          </a>
        ))}
      </nav>
      <div className="flex h-[126px] shrink-0 items-center justify-between bg-[#f1f1f1] pr-[214px] pl-[218px] text-[#8c8c8c]">
        <button type="button" aria-label="Poslední aplikace">
          <svg viewBox="0 0 44 44" className="block h-11 w-11" fill="none" stroke="currentColor" strokeWidth="5" strokeLinecap="round" aria-hidden="true">
            <path d="M6 5V40M22 5V40M38 5V40" />
          </svg>
        </button>
        <button type="button" aria-label="Domů">
          <svg viewBox="0 0 44 44" className="block h-11 w-11" fill="none" stroke="currentColor" strokeWidth="5" aria-hidden="true">
            <rect x="4" y="4" width="37" height="37" rx="11" />
          </svg>
        </button>
        <button type="button" aria-label="Zpět">
          <svg viewBox="0 0 44 44" className="block h-11 w-11" fill="none" stroke="currentColor" strokeWidth="5" strokeLinecap="round" aria-hidden="true">
            <path d="M33 5L15 22.5L33 40" />
          </svg>
        </button>
      </div>
    </div>
  );
}
